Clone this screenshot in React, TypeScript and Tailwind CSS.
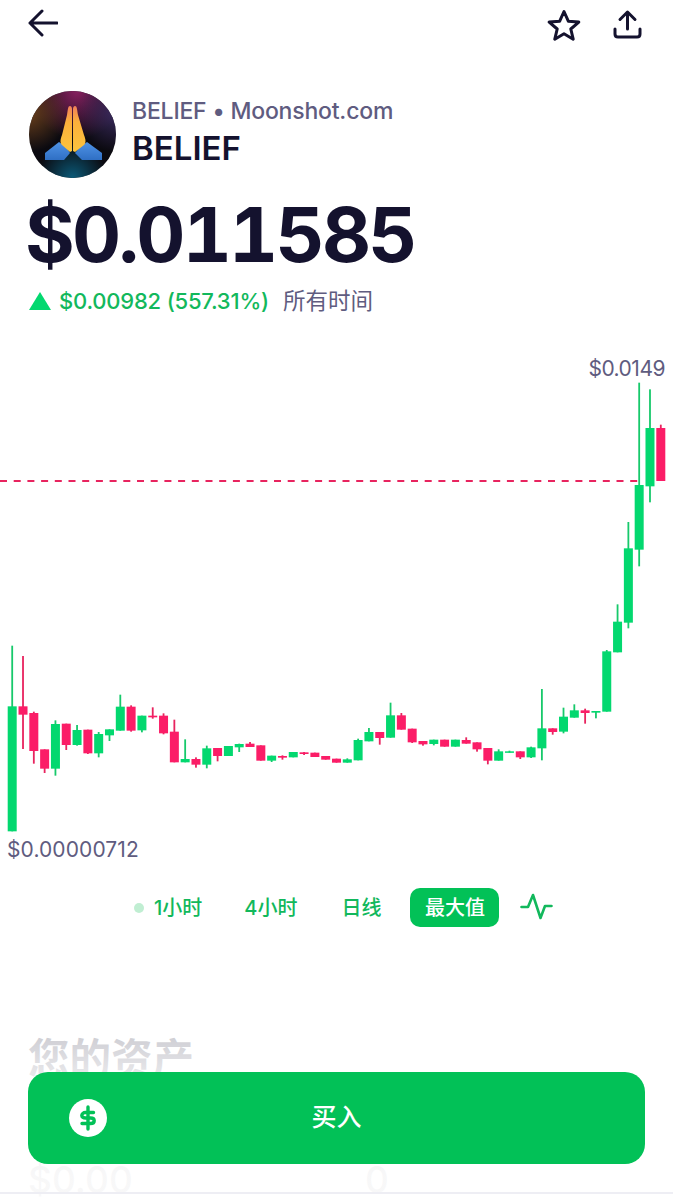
const FONT = "font-['Inter','Noto_Sans_CJK_SC',sans-serif]";

// [up, wickTop, bodyTop, bodyBottom, wickBottom], in thirds of a pixel from y = 630
const CANDLES: [number, number, number, number, number][] = [
  [1,47,229,604,604],[0,78,229,254,357],[0,245,249,363,401],[0,358,358,416,429],[1,271,282,416,437],
  [0,281,281,345,360],[1,285,300,345,347],[0,299,299,370,372],[1,306,312,370,382],[1,298,298,316,333],
  [1,194,230,302,302],[0,226,230,302,305],[1,257,257,301,307],[0,232,257,262,266],[0,250,257,310,313],
  [0,269,305,397,397],[1,328,387,397,397],[0,382,387,404,413],[1,347,355,404,415],[0,354,354,378,394],
  [1,348,348,378,378],[1,341,342,352,366],[0,336,341,351,351],[0,346,346,392,392],[1,377,377,392,396],
  [0,376,378,383,389],[1,366,366,382,382],[0,366,367,372,375],[0,368,368,381,381],[0,378,378,389,389],
  [0,386,386,398,398],[1,385,388,398,398],[1,326,330,391,391],[1,294,306,334,334],[0,306,306,324,344],
  [1,218,256,323,323],[0,249,256,299,299],[0,296,296,337,339],[0,333,333,343,347],[1,329,329,342,346],
  [0,329,329,350,350],[1,329,329,350,350],[0,322,330,341,341],[0,337,337,358,365],[0,354,354,392,403],
  [1,358,364,392,392],[1,362,364,368,368],[0,364,364,382,387],[1,350,352,382,384],[1,177,295,355,391],
  [0,295,295,306,314],[1,233,260,305,310],[1,223,241,263,263],[0,236,241,249,281],[1,243,243,248,265],
  [1,60,64,245,245],[1,-77,-25,67,67],[1,-324,-245,-22,-5],[1,-742,-435,-241,-191],[1,-722,-606,-431,-383],
  [0,-616,-606,-447,-447],
];

function Chart() {
  const y = (v: number) => 630 + v / 3;
  return (
    <svg width="673" height="510" viewBox="0 350 673 510" className="block">
      <line x1="0" x2="640" y1="481" y2="481" stroke="#e8245f" strokeWidth="2" strokeDasharray="7 6.7" />
      {CANDLES.map(([up, wt, bt, bb, wb], i) => {
        const cx = 12.2 + i * 10.81;
        const c = up ? "#03d86f" : "#fb1d67";
        return (
          <g key={i}>
            <rect x={cx - 0.9} y={y(wt)} width="1.8" height={(wb - wt) / 3} fill={up ? "#17c96b" : "#e8245f"} />
            <rect x={cx - 4.5} y={y(bt)} width="9" height={Math.max((bb - bt) / 3, 1.5)} fill={c} />
          </g>
        );
      })}
    </svg>
  );
}

function Avatar() {
  return (
    <svg width="87" height="87" viewBox="0 0 87 87" className="block shrink-0">
      <defs>
        <radialGradient id="t" cx="0.55" cy="0" r="0.55">
          <stop offset="0" stopColor="#86205f" />
          <stop offset="1" stopColor="#86205f" stopOpacity="0" />
        </radialGradient>
        <radialGradient id="l" cx="0" cy="0.25" r="0.45">
          <stop offset="0" stopColor="#6a3f1c" />
          <stop offset="1" stopColor="#6a3f1c" stopOpacity="0" />
        </radialGradient>
        <radialGradient id="b" cx="0.5" cy="1" r="0.4">
          <stop offset="0" stopColor="#0b5a78" />
          <stop offset="1" stopColor="#0b5a78" stopOpacity="0" />
        </radialGradient>
        <radialGradient id="r" cx="1" cy="0.25" r="0.45">
          <stop offset="0" stopColor="#3a2a5e" />
          <stop offset="1" stopColor="#3a2a5e" stopOpacity="0" />
        </radialGradient>
        <linearGradient id="h" x1="0" y1="0" x2="0" y2="1">
          <stop offset="0" stopColor="#f0805a" />
          <stop offset="0.35" stopColor="#fbb03b" />
          <stop offset="1" stopColor="#fcc43e" />
        </linearGradient>
        <linearGradient id="s" x1="0" y1="0" x2="0" y2="1">
          <stop offset="0" stopColor="#4f93e6" />
          <stop offset="1" stopColor="#2f6fc4" />
        </linearGradient>
      </defs>
      <circle cx="43.5" cy="43.5" r="43.5" fill="#0b0a10" />
      <circle cx="43.5" cy="43.5" r="43.5" fill="url(#t)" />
      <circle cx="43.5" cy="43.5" r="43.5" fill="url(#l)" />
      <circle cx="43.5" cy="43.5" r="43.5" fill="url(#r)" />
      <circle cx="43.5" cy="43.5" r="43.5" fill="url(#b)" />
      <path d="M16 69 L16 62 L30 51 L37 56 L41 62 L35 69 Z" fill="url(#s)" />
      <path d="M73 69 L73 62 L58 51 L51 56 L46 62 L53 69 Z" fill="url(#s)" />
      <path d="M41 15 C39 15 39 18 38 24 L33 44 C31 49 31 52 33 54 L41 61 L43 60 L43 18 C43 16 42 15 41 15 Z" fill="url(#h)" />
      <path d="M46 15 C48 15 48 18 49 24 L55 44 C57 49 57 52 55 54 L46 61 L44 60 L44 18 C44 16 45 15 46 15 Z" fill="url(#h)" />
    </svg>
  );
}

function TopIcons() {
  return (
    <div className="flex items-start justify-between pl-[28px] pr-[31px] pt-[9px]">
      <svg width="30" height="28" viewBox="0 0 30 28" fill="none" stroke="#14122e" strokeWidth="3" strokeLinecap="round" strokeLinejoin="round">
        <path d="M29 14H2M14 2L2 14L14 26" />
      </svg>
      <div className="flex items-start gap-[32px]">
        <svg width="34" height="32" viewBox="0 0 34 32" fill="none" stroke="#14122e" strokeWidth="3" strokeLinejoin="round">
          <path d="M17 2.5L21.3 12.2L31.8 13.1L23.8 20L26.2 30.2L17 24.8L7.8 30.2L10.2 20L2.2 13.1L12.7 12.2Z" />
        </svg>
        <svg width="29" height="30" viewBox="0 0 29 30" fill="none" stroke="#14122e" strokeWidth="3" strokeLinecap="round" strokeLinejoin="round">
          <path d="M14.5 3V20M7 10.5L14.5 3L22 10.5M2 20V25C2 27 3 28 5 28H24C26 28 27 27 27 25V20" />
        </svg>
      </div>
    </div>
  );
}

function Tabs() {
  return (
    <div className="mt-[28px] flex h-[39px] items-center text-[20px] font-medium text-[#12b85c]">
      <span className="ml-[134px] size-[10px] rounded-full bg-[#c0eed2]" />
      <span className="ml-[10px]">1小时</span>
      <span className="ml-[42px]">4小时</span>
      <span className="ml-[44px]">日线</span>
      <span className="ml-[29px] flex h-[39px] w-[89px] items-center justify-center rounded-[10px] bg-[#02c157] text-white">最大值</span>
      <svg className="ml-[21px] mb-[2px]" width="33" height="27" viewBox="0 0 33 27" fill="none" stroke="#12b85c" strokeWidth="2.6" strokeLinecap="round" strokeLinejoin="round">
        <path d="M1.5 14H8L13 2L20.5 25L25 13H31.5" />
      </svg>
    </div>
  );
}

export default function App() {
  return (
    <div className={`relative h-[1200px] w-[673px] overflow-hidden bg-white ${FONT}`}>
      <TopIcons />
      <div className="mt-[50px] flex items-center gap-[16px] pl-[29px]">
        <Avatar />
        <div className="mb-[6px] flex flex-col">
          <span className="text-[23px] leading-[30px] font-medium tracking-[-0.2px] text-[#5f5c80]">BELIEF • Moonshot.com</span>
          <span className="mt-[3px] text-[33px] leading-[38px] font-semibold text-[#14122e]">BELIEF</span>
        </div>
      </div>
      <div className="mt-[11px] pl-[25px] text-[76px] leading-[90px] font-bold tracking-[-2.7px] tabular-nums text-[#14122e]">$0.011585</div>
      <div className="mt-[7px] flex h-[30px] items-center pl-[29px] text-[22px]">
        <span className="h-0 w-0 border-x-[11px] border-b-[18px] border-x-transparent border-b-[#03d86f]" />
        <span className="ml-[8px] font-medium tracking-[-0.2px] text-[#12b85c]">$0.00982 (557.31%)</span>
        <span className="ml-[14px] text-[22.5px] text-[#5f5c80]">所有时间</span>
      </div>
      <div className="relative mt-[34px]">
        <Chart />
        <span className="absolute right-[8px] top-[6px] text-[21px] leading-[26px] tracking-[-0.5px] text-[#5f5c80]">$0.0149</span>
        <span className="absolute left-[7px] top-[487px] text-[21px] leading-[26px] tracking-[0.1px] text-[#5f5c80]">$0.00000712</span>
      </div>
      <Tabs />
      <div className="mt-[107px] pl-[28px] text-[41.5px] leading-[50px] font-bold text-[#14122e]">您的资产</div>
      <div className="mt-[74px] flex pl-[28px] text-[37px] leading-[44px] font-medium text-[#14122e]">
        <span className="w-[337px]">$0.00</span>
        <span>0</span>
      </div>
      <div className="pointer-events-none absolute inset-x-0 top-[950px] h-[250px] bg-[linear-gradient(to_bottom,rgba(255,255,255,0)_0%,rgba(255,255,255,0.8)_35%,rgba(255,255,255,0.9)_50%,rgba(255,255,255,0.97)_90%)]" />
      <div className="absolute inset-x-0 bottom-[6px] h-[2px] bg-[#eeeef4]" />
      <button className="absolute left-[28px] top-[1072px] flex h-[92px] w-[617px] items-center justify-center rounded-[20px] bg-[#02c157] text-[25px] font-medium text-white">
        <span className="absolute left-[41px] top-[27px] flex size-[38px] items-center justify-center rounded-full bg-white">
          <svg width="24" height="26" viewBox="0 0 24 26" fill="none" stroke="#02c157" strokeWidth="3.4" strokeLinecap="round">
            <path d="M12 2V24M17.5 7.5H9.5C7.3 7.5 5.8 9 5.8 10.5C5.8 12.2 7.3 13 9.5 13H14.5C16.7 13 18.2 14 18.2 15.7C18.2 17.3 16.7 18.5 14.5 18.5H6" />
          </svg>
        </span>
        买入
      </button>
    </div>
  );
}
